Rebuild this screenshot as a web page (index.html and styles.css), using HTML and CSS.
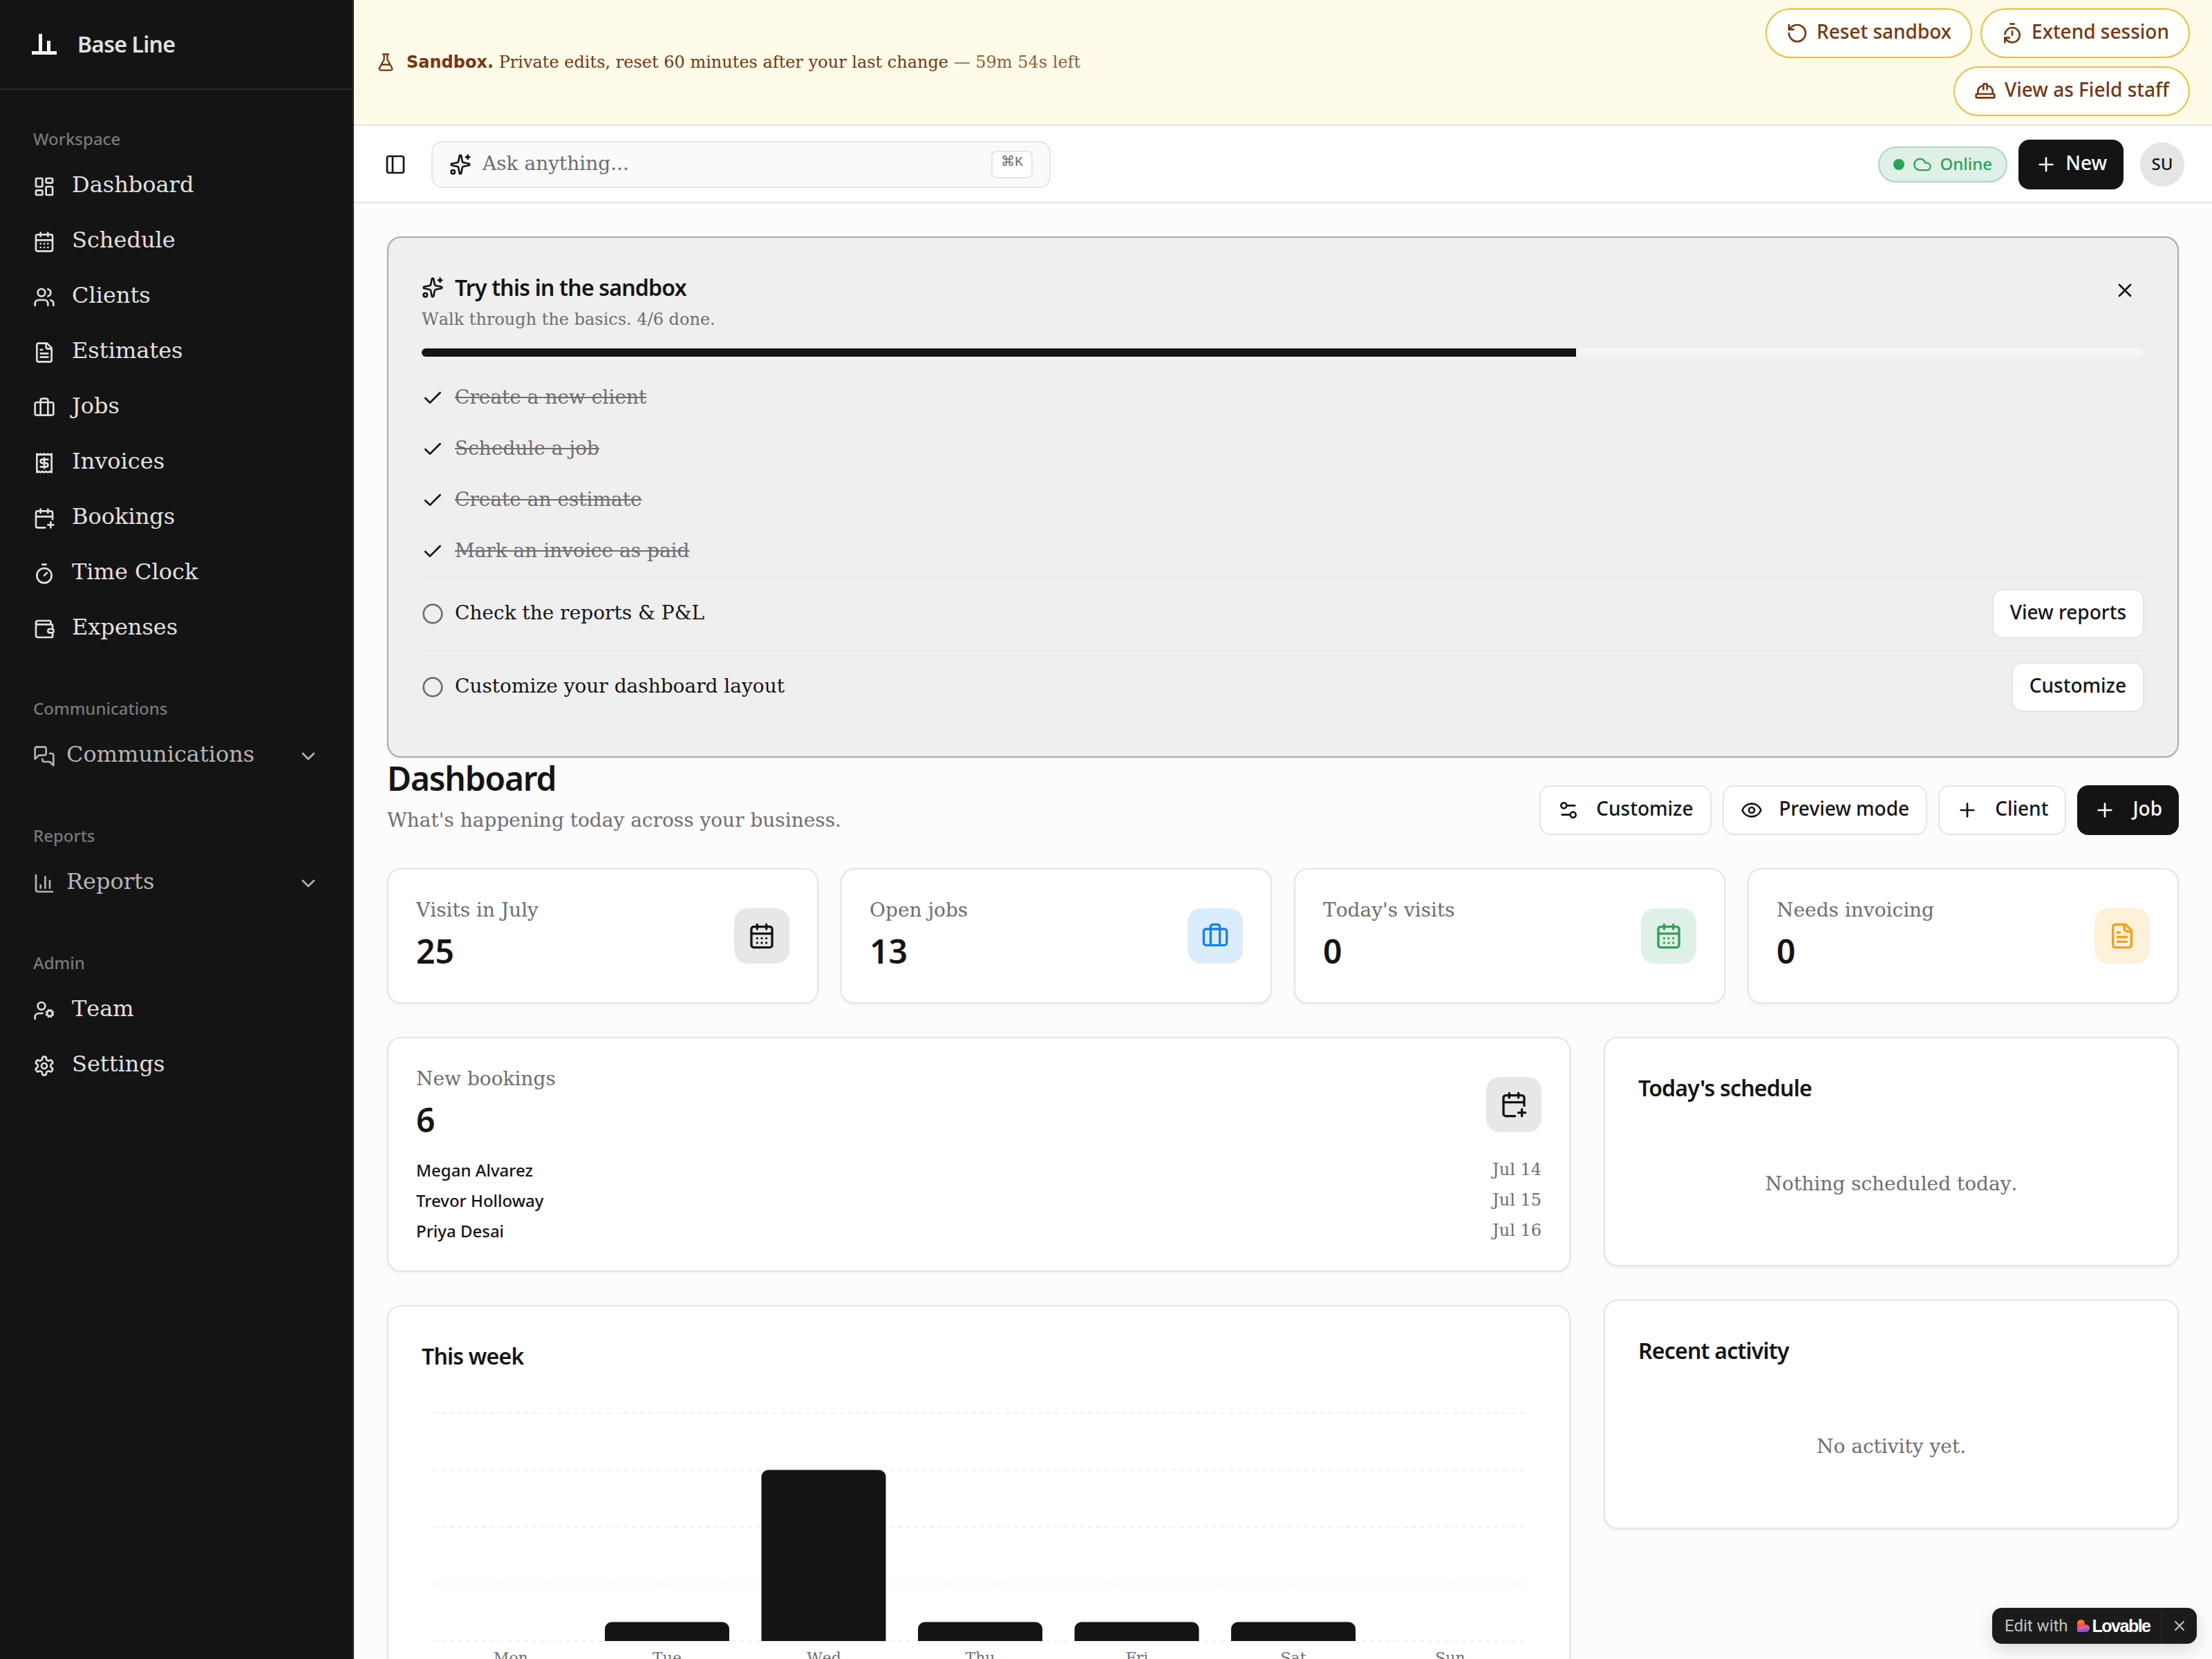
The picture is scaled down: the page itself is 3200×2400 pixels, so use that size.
FILE: index.html
```
<!DOCTYPE html>
<html lang="en">
<head>
    <meta charset="UTF-8">
    <meta name="viewport" content="width=device-width, initial-scale=1.0">
    <title>Base Line - Dashboard</title>

    <link rel="stylesheet" href="styles.css">
</head>
<body>
    <!-- icon set -->
    <svg class="sprite" xmlns="http://www.w3.org/2000/svg">
        <symbol id="grid" viewBox="0 0 24 24"><rect width="7" height="9" x="3" y="3" rx="1"/><rect width="7" height="5" x="14" y="3" rx="1"/><rect width="7" height="9" x="14" y="12" rx="1"/><rect width="7" height="5" x="3" y="16" rx="1"/></symbol>
        <symbol id="calendar" viewBox="0 0 24 24"><path d="M8 2v4M16 2v4"/><rect width="18" height="18" x="3" y="4" rx="2"/><path d="M3 10h18M8 14h.01M12 14h.01M16 14h.01M8 18h.01M12 18h.01M16 18h.01"/></symbol>
        <symbol id="users" viewBox="0 0 24 24"><path d="M16 21v-2a4 4 0 0 0-4-4H6a4 4 0 0 0-4 4v2"/><circle cx="9" cy="7" r="4"/><path d="M22 21v-2a4 4 0 0 0-3-3.87M16 3.13a4 4 0 0 1 0 7.75"/></symbol>
        <symbol id="file" viewBox="0 0 24 24"><path d="M15 2H6a2 2 0 0 0-2 2v16a2 2 0 0 0 2 2h12a2 2 0 0 0 2-2V7Z"/><path d="M14 2v4a2 2 0 0 0 2 2h4M10 9H8M16 13H8M16 17H8"/></symbol>
        <symbol id="case" viewBox="0 0 24 24"><path d="M16 20V4a2 2 0 0 0-2-2h-4a2 2 0 0 0-2 2v16"/><rect width="20" height="14" x="2" y="6" rx="2"/></symbol>
        <symbol id="receipt" viewBox="0 0 24 24"><path d="M4 2v20l2-1 2 1 2-1 2 1 2-1 2 1 2-1 2 1V2l-2 1-2-1-2 1-2-1-2 1-2-1-2 1Z"/><path d="M16 8h-6a2 2 0 1 0 0 4h4a2 2 0 1 1 0 4H8M12 17.5v-11"/></symbol>
        <symbol id="calendar-plus" viewBox="0 0 24 24"><path d="M8 2v4M16 2v4M21 13V6a2 2 0 0 0-2-2H5a2 2 0 0 0-2 2v14a2 2 0 0 0 2 2h8M3 10h18M16 19h6M19 16v6"/></symbol>
        <symbol id="timer" viewBox="0 0 24 24"><path d="M10 2h4M12 14l3-3"/><circle cx="12" cy="14" r="8"/></symbol>
        <symbol id="wallet" viewBox="0 0 24 24"><path d="M19 7V4a1 1 0 0 0-1-1H5a2 2 0 0 0 0 4h15a1 1 0 0 1 1 1v4h-3a2 2 0 0 0 0 4h3a1 1 0 0 0 1-1v-2a1 1 0 0 0-1-1"/><path d="M3 5v14a2 2 0 0 0 2 2h15a1 1 0 0 0 1-1v-4"/></symbol>
        <symbol id="messages" viewBox="0 0 24 24"><path d="M14 9a2 2 0 0 1-2 2H6l-4 4V4a2 2 0 0 1 2-2h8a2 2 0 0 1 2 2z"/><path d="M18 9h2a2 2 0 0 1 2 2v11l-4-4h-6a2 2 0 0 1-2-2v-1"/></symbol>
        <symbol id="chart" viewBox="0 0 24 24"><path d="M3 3v16a2 2 0 0 0 2 2h16M18 17V9M13 17V5M8 17v-3"/></symbol>
        <symbol id="user-cog" viewBox="0 0 24 24"><path d="M10 15H6a4 4 0 0 0-4 4v2M14.305 16.53l.923-.382M15.228 13.852l-.923-.383M16.852 12.228l-.383-.923M16.852 17.772l-.383.924M19.148 12.228l.383-.923M19.53 18.696l-.382-.924M20.772 13.852l.924-.383M20.772 16.148l.924.383"/><circle cx="18" cy="15" r="3"/><circle cx="9" cy="7" r="4"/></symbol>
        <symbol id="gear" viewBox="0 0 24 24"><path d="M12.22 2h-.44a2 2 0 0 0-2 2v.18a2 2 0 0 1-1 1.73l-.43.25a2 2 0 0 1-2 0l-.15-.08a2 2 0 0 0-2.73.73l-.22.38a2 2 0 0 0 .73 2.73l.15.1a2 2 0 0 1 1 1.72v.51a2 2 0 0 1-1 1.74l-.15.09a2 2 0 0 0-.73 2.73l.22.38a2 2 0 0 0 2.73.73l.15-.08a2 2 0 0 1 2 0l.43.25a2 2 0 0 1 1 1.73V20a2 2 0 0 0 2 2h.44a2 2 0 0 0 2-2v-.18a2 2 0 0 1 1-1.73l.43-.25a2 2 0 0 1 2 0l.15.08a2 2 0 0 0 2.73-.73l.22-.39a2 2 0 0 0-.73-2.73l-.15-.08a2 2 0 0 1-1-1.74v-.5a2 2 0 0 1 1-1.74l.15-.09a2 2 0 0 0 .73-2.73l-.22-.38a2 2 0 0 0-2.73-.73l-.15.08a2 2 0 0 1-2 0l-.43-.25a2 2 0 0 1-1-1.73V4a2 2 0 0 0-2-2z"/><circle cx="12" cy="12" r="3"/></symbol>
        <symbol id="chevron" viewBox="0 0 24 24"><path d="m6 9 6 6 6-6"/></symbol>
        <symbol id="flask" viewBox="0 0 24 24"><path d="M14 2v6a2 2 0 0 0 .245.96l5.51 10.08A2 2 0 0 1 18 22H6a2 2 0 0 1-1.755-2.96l5.51-10.08A2 2 0 0 0 10 8V2M6.453 15h11.094M8.5 2h7"/></symbol>
        <symbol id="reset" viewBox="0 0 24 24"><path d="M3 12a9 9 0 1 0 9-9 9.75 9.75 0 0 0-6.74 2.74L3 8"/><path d="M3 3v5h5"/></symbol>
        <symbol id="timer-reset" viewBox="0 0 24 24"><path d="M10 2h4M12 14v-4M4 13a8 8 0 0 1 8-7 8 8 0 1 1-5.3 14L4 17.6"/><path d="M9 17H4v5"/></symbol>
        <symbol id="hat" viewBox="0 0 24 24"><path d="M10 10V5a1 1 0 0 1 1-1h2a1 1 0 0 1 1 1v5M14 6a6 6 0 0 1 6 6v3M4 15v-3a6 6 0 0 1 6-6"/><rect x="2" y="15" width="20" height="4" rx="1"/></symbol>
        <symbol id="panel" viewBox="0 0 24 24"><rect width="18" height="18" x="3" y="3" rx="2"/><path d="M9 3v18"/></symbol>
        <symbol id="sparkles" viewBox="0 0 24 24"><path d="M11.017 2.814a1 1 0 0 1 1.966 0l1.051 5.558a2 2 0 0 0 1.594 1.594l5.558 1.051a1 1 0 0 1 0 1.966l-5.558 1.051a2 2 0 0 0-1.594 1.594l-1.051 5.558a1 1 0 0 1-1.966 0l-1.051-5.558a2 2 0 0 0-1.594-1.594l-5.558-1.051a1 1 0 0 1 0-1.966l5.558-1.051a2 2 0 0 0 1.594-1.594zM20 2v4M22 4h-4"/><circle cx="4" cy="20" r="2"/></symbol>
        <symbol id="cloud" viewBox="0 0 24 24"><path d="M17.5 19H9a7 7 0 1 1 6.71-9h1.79a4.5 4.5 0 1 1 0 9Z"/></symbol>
        <symbol id="plus" viewBox="0 0 24 24"><path d="M5 12h14M12 5v14"/></symbol>
        <symbol id="close" viewBox="0 0 24 24"><path d="M18 6 6 18M6 6l12 12"/></symbol>
        <symbol id="check" viewBox="0 0 24 24"><path d="M20 6 9 17l-5-5"/></symbol>
        <symbol id="circle" viewBox="0 0 24 24"><circle cx="12" cy="12" r="10"/></symbol>
        <symbol id="sliders" viewBox="0 0 24 24"><path d="M14 17H5M19 7h-9"/><circle cx="17" cy="17" r="3"/><circle cx="7" cy="7" r="3"/></symbol>
        <symbol id="eye" viewBox="0 0 24 24"><path d="M2.062 12.348a1 1 0 0 1 0-.696 10.75 10.75 0 0 1 19.876 0 1 1 0 0 1 0 .696 10.75 10.75 0 0 1-19.876 0"/><circle cx="12" cy="12" r="3"/></symbol>
    </svg>

    <aside class="sidebar">
        <div class="brand">
            <svg class="logo" viewBox="0 0 36 30"><path d="M0 25h36v5H0zM10 0h5v26h-5zM22 10h5v16h-5z"/></svg>
            <span>Base Line</span>
        </div>
        <nav class="nav">
            <h4>Workspace</h4>
            <a><svg class="icon"><use href="#grid"/></svg><span>Dashboard</span></a>
            <a><svg class="icon"><use href="#calendar"/></svg><span>Schedule</span></a>
            <a><svg class="icon"><use href="#users"/></svg><span>Clients</span></a>
            <a><svg class="icon"><use href="#file"/></svg><span>Estimates</span></a>
            <a><svg class="icon"><use href="#case"/></svg><span>Jobs</span></a>
            <a><svg class="icon"><use href="#receipt"/></svg><span>Invoices</span></a>
            <a><svg class="icon"><use href="#calendar-plus"/></svg><span>Bookings</span></a>
            <a><svg class="icon"><use href="#timer"/></svg><span>Time Clock</span></a>
            <a><svg class="icon"><use href="#wallet"/></svg><span>Expenses</span></a>
            <h4>Communications</h4>
            <a class="fold"><svg class="icon"><use href="#messages"/></svg><span>Communications</span><svg class="icon arrow"><use href="#chevron"/></svg></a>
            <h4>Reports</h4>
            <a class="fold"><svg class="icon"><use href="#chart"/></svg><span>Reports</span><svg class="icon arrow"><use href="#chevron"/></svg></a>
            <h4>Admin</h4>
            <a><svg class="icon"><use href="#user-cog"/></svg><span>Team</span></a>
            <a><svg class="icon"><use href="#gear"/></svg><span>Settings</span></a>
        </nav>
    </aside>

    <div class="page">
        <div class="banner">
            <svg class="icon small"><use href="#flask"/></svg>
            <p><strong>Sandbox.</strong> Private edits, reset 60 minutes after your last change <span class="left">— 59m 54s left</span></p>
            <div class="banner-actions">
                <button class="btn pill"><svg class="icon"><use href="#reset"/></svg><span>Reset sandbox</span></button>
                <button class="btn pill"><svg class="icon"><use href="#timer-reset"/></svg><span>Extend session</span></button>
                <button class="btn pill"><svg class="icon"><use href="#hat"/></svg><span>View as Field staff</span></button>
            </div>
        </div>

        <header class="topbar">
            <svg class="icon toggle"><use href="#panel"/></svg>
            <div class="search">
                <svg class="icon"><use href="#sparkles"/></svg>
                <span>Ask anything...</span>
                <kbd>⌘K</kbd>
            </div>
            <div class="online"><i class="dot"></i><svg class="icon small"><use href="#cloud"/></svg><span>Online</span></div>
            <button class="btn dark new"><svg class="icon"><use href="#plus"/></svg><span>New</span></button>
            <div class="avatar">SU</div>
        </header>

        <main class="content">
            <section class="card guide">
                <div class="guide-head">
                    <div>
                        <h3><svg class="icon"><use href="#sparkles"/></svg><span>Try this in the sandbox</span></h3>
                        <p>Walk through the basics. 4/6 done.</p>
                    </div>
                    <div class="close"><svg class="icon"><use href="#close"/></svg></div>
                </div>
                <div class="progress"><div class="progress-bar" style="width: 67%"></div></div>
                <ul class="steps">
                    <li class="done"><svg class="icon"><use href="#check"/></svg><span>Create a new client</span></li>
                    <li class="done"><svg class="icon"><use href="#check"/></svg><span>Schedule a job</span></li>
                    <li class="done"><svg class="icon"><use href="#check"/></svg><span>Create an estimate</span></li>
                    <li class="done"><svg class="icon"><use href="#check"/></svg><span>Mark an invoice as paid</span></li>
                    <li><svg class="icon"><use href="#circle"/></svg><span>Check the reports &amp; P&amp;L</span><button class="btn"><span>View reports</span></button></li>
                    <li><svg class="icon"><use href="#circle"/></svg><span>Customize your dashboard layout</span><button class="btn"><span>Customize</span></button></li>
                </ul>
            </section>

            <div class="title-row">
                <div>
                    <h1>Dashboard</h1>
                    <p>What's happening today across your business.</p>
                </div>
                <div class="actions">
                    <button class="btn wide"><svg class="icon"><use href="#sliders"/></svg><span>Customize</span></button>
                    <button class="btn wide"><svg class="icon"><use href="#eye"/></svg><span>Preview mode</span></button>
                    <button class="btn wide"><svg class="icon"><use href="#plus"/></svg><span>Client</span></button>
                    <button class="btn wide dark"><svg class="icon"><use href="#plus"/></svg><span>Job</span></button>
                </div>
            </div>

            <div class="stats">
                <div class="card stat">
                    <div><p>Visits in July</p><b>25</b></div>
                    <div class="tile"><svg class="icon"><use href="#calendar"/></svg></div>
                </div>
                <div class="card stat">
                    <div><p>Open jobs</p><b>13</b></div>
                    <div class="tile blue"><svg class="icon"><use href="#case"/></svg></div>
                </div>
                <div class="card stat">
                    <div><p>Today's visits</p><b>0</b></div>
                    <div class="tile green"><svg class="icon"><use href="#calendar"/></svg></div>
                </div>
                <div class="card stat">
                    <div><p>Needs invoicing</p><b>0</b></div>
                    <div class="tile amber"><svg class="icon"><use href="#file"/></svg></div>
                </div>
            </div>

            <div class="columns">
                <div class="col">
                    <section class="card bookings">
                        <div class="stat">
                            <div><p>New bookings</p><b>6</b></div>
                            <div class="tile"><svg class="icon"><use href="#calendar-plus"/></svg></div>
                        </div>
                        <ul>
                            <li><span>Megan Alvarez</span><time>Jul 14</time></li>
                            <li><span>Trevor Holloway</span><time>Jul 15</time></li>
                            <li><span>Priya Desai</span><time>Jul 16</time></li>
                        </ul>
                    </section>
                    <section class="card week">
                        <h3>This week</h3>
                        <svg class="chart" viewBox="0 0 1612 440">
                            <path class="lines" d="M16 46H1594M16 128.5H1594M16 211H1594M16 293.5H1594M16 376H1594"/>
                            <path class="bars" d="M265 376v-17.5a10 10 0 0 1 10-10h160a10 10 0 0 1 10 10V376z"/>
                            <path class="bars" d="M491.500 376V138.500a10 10 0 0 1 10-10h160a10 10 0 0 1 10 10V376z"/>
                            <path class="bars" d="M718 376v-17.5a10 10 0 0 1 10-10h160a10 10 0 0 1 10 10V376z"/>
                            <path class="bars" d="M944.500 376v-17.5a10 10 0 0 1 10-10h160a10 10 0 0 1 10 10V376z"/>
                            <path class="bars" d="M1171 376v-17.5a10 10 0 0 1 10-10h160a10 10 0 0 1 10 10V376z"/>
                            <text x="129" y="408">Mon</text>
                            <text x="355" y="408">Tue</text>
                            <text x="582" y="408">Wed</text>
                            <text x="808" y="408">Thu</text>
                            <text x="1035" y="408">Fri</text>
                            <text x="1261" y="408">Sat</text>
                            <text x="1488" y="408">Sun</text>
                        </svg>
                    </section>
                </div>
                <div class="col">
                    <section class="card side">
                        <h3>Today's schedule</h3>
                        <p>Nothing scheduled today.</p>
                    </section>
                    <section class="card side">
                        <h3>Recent activity</h3>
                        <p>No activity yet.</p>
                    </section>
                </div>
            </div>
        </main>
    </div>

    <div class="badge">
        <span class="edit">Edit with</span>
        <svg class="heart" viewBox="0 0 18 18">
            <defs>
                <linearGradient id="flame" x1="0.35" y1="0" x2="0.5" y2="1">
                    <stop offset="0.2" stop-color="#ff7a14"/>
                    <stop offset="0.45" stop-color="#fb4a3c"/>
                    <stop offset="0.65" stop-color="#f257b0"/>
                    <stop offset="0.95" stop-color="#5a62d6"/>
                </linearGradient>
            </defs>
            <path fill="url(#flame)" d="M0 5.500a5.500 5.500 0 0 1 11 0v1.500h1.500a5.500 5.500 0 0 1 0 11H0z"/>
        </svg>
        <span class="name">Lovable</span>
        <svg class="icon badge-close"><use href="#close"/></svg>
    </div>
</body>
</html>
```

FILE: styles.css
```
*{
    box-sizing: border-box;
    margin: 0;
    padding: 0;
}

body{
    display: flex;
    width: 3200px;
    height: 2400px;
    overflow: hidden;
    background-color: #fcfcfc;
    color: #141414;
    font-family: "DejaVu Serif", serif;
    font-size: 28px;
    line-height: 40px;
    font-kerning: none;
}

ul{
    list-style: none;
}

.sprite{
    position: absolute;
    width: 0;
    height: 0;
}

.icon{
    flex: none;
    width: 32px;
    height: 32px;
    fill: none;
    stroke: currentColor;
    stroke-width: 2;
    stroke-linecap: round;
    stroke-linejoin: round;
}

.icon.small{
    width: 28px;
    height: 28px;
}

/* sidebar */
.sidebar{
    flex: none;
    width: 512px;
    height: 2400px;
    background-color: #141414;
    border-right: 2px solid #2b2b2b;
    color: #e0e0e0;
}

.brand{
    display: flex;
    align-items: center;
    gap: 30px;
    height: 130px;
    padding-left: 46px;
    border-bottom: 2px solid #2b2b2b;
    font: 600 32px/44px "Noto Sans", sans-serif;
    letter-spacing: -0.8px;
}

.brand span{
    padding-bottom: 1px;
}

.logo{
    width: 36px;
    height: 30px;
    fill: #fff;
}

.nav{
    padding: 47px 48px 0;
}

.nav h4{
    height: 48px;
    margin-bottom: 5px;
    font: 500 24px/48px "Noto Sans", sans-serif;
    color: #787878;
}

.nav a + h4{
    margin-top: 51px;
}

.nav a{
    display: flex;
    align-items: center;
    gap: 24px;
    height: 80px;
    font-size: 32px;
}

.nav a span{
    padding-bottom: 6px;
}

.nav .fold{
    gap: 16px;
    color: #b4b4b4;
}

.nav .arrow{
    margin-left: auto;
}

/* right part */
.page{
    flex: 1;
    min-width: 0;
}

.banner{
    display: flex;
    align-items: center;
    gap: 16px;
    height: 182px;
    padding: 0 32px;
    background-color: #fffbe9;
    border-bottom: 2px solid #e5e5e5;
    color: #78350f;
    font-size: 24px;
}

.banner strong{
    font-family: "DejaVu Sans", sans-serif;
    font-weight: 700;
}

.left{
    opacity: .8;
}

.banner-actions{
    display: flex;
    flex-wrap: wrap;
    justify-content: flex-end;
    gap: 12px;
    width: 700px;
    margin-left: auto;
}

.btn{
    display: flex;
    flex: none;
    align-items: center;
    gap: 12px;
    height: 72px;
    padding: 0 24px;
    background-color: #fff;
    border: 2px solid #e5e5e5;
    border-radius: 16px;
    color: #141414;
    font: 500 28px/40px "Noto Sans", sans-serif;
}

.btn span{
    padding-bottom: 6px;
}

.btn.pill{
    padding: 0 28px;
    background-color: #fffffb;
    border-color: #f0bc3c;
    border-radius: 36px;
    color: #78350f;
}

.btn.dark{
    background-color: #141414;
    border: 0;
    color: #fff;
}

.btn.wide{
    gap: 24px;
}

.topbar{
    display: flex;
    align-items: center;
    height: 112px;
    padding: 2px 40px 0 44px;
    background-color: #fff;
    border-bottom: 2px solid #e5e5e5;
}

.search{
    display: flex;
    align-items: center;
    gap: 16px;
    width: 896px;
    height: 68px;
    margin-left: 36px;
    padding: 0 24px;
    background-color: #fafafa;
    border: 2px solid #e5e5e5;
    border-radius: 16px;
}

.search span{
    padding-bottom: 2px;
    color: #6e6e6e;
}

kbd{
    height: 40px;
    min-width: 60px;
    margin-left: auto;
    padding: 0 12px;
    background-color: #fff;
    border: 2px solid #e5e5e5;
    border-radius: 8px;
    color: #6e6e6e;
    font: 20px/30px "Liberation Mono", "DejaVu Sans", monospace;
    text-align: center;
}

.online{
    display: flex;
    align-items: center;
    gap: 12px;
    height: 52px;
    margin-left: auto;
    padding: 0 20px;
    background-color: #dff1e6;
    border: 2px solid #a9d9bd;
    border-radius: 26px;
    color: #2ba359;
    font: 500 24px/32px "Noto Sans", sans-serif;
}

.online span{
    padding-bottom: 2px;
}

.dot{
    width: 16px;
    height: 16px;
    background-color: #2ba359;
    border-radius: 50%;
}

.new{
    margin-left: 16px;
}

.avatar{
    width: 64px;
    height: 64px;
    margin-left: 24px;
    background-color: #e5e5e5;
    border-radius: 50%;
    font: 500 24px/62px "Noto Sans", sans-serif;
    text-align: center;
}

.content{
    padding: 48px;
}

.card{
    background-color: #fff;
    border: 2px solid #e5e5e5;
    border-radius: 20px;
    box-shadow: 0 2px 4px rgba(0, 0, 0, .05);
}

h3{
    font: 600 32px/48px "Noto Sans", sans-serif;
    letter-spacing: -0.8px;
}

/* onboarding */
.guide{
    height: 754px;
    padding: 48px;
    background-color: #efefef;
    border-color: #a9a9a9;
}

.guide-head{
    display: flex;
    justify-content: space-between;
    height: 112px;
}

.guide-head h3{
    display: flex;
    align-items: center;
    gap: 16px;
    height: 48px;
}

.guide-head p{
    margin-top: 2px;
    color: #6e6e6e;
    font-size: 24px;
}

.close{
    padding: 12px;
}

.progress{
    height: 12px;
    overflow: hidden;
    background-color: #f5f5f5;
    border-radius: 6px;
}

.progress-bar{
    height: 12px;
    background-color: #141414;
}

.steps{
    margin-top: 24px;
}

.steps li{
    display: flex;
    align-items: center;
    gap: 16px;
    height: 74px;
    padding: 16px 0;
    border-bottom: 2px solid #eaeaea;
}

.steps li:not(.done){
    height: 106px;
}

.steps li:last-child{
    height: 104px;
    border-bottom: 0;
}

.steps li > span{
    padding-bottom: 2px;
}

.steps li > .icon{
    color: #6e6e6e;
}

.steps .done > .icon{
    color: #141414;
}

.steps .done span{
    color: #6e6e6e;
    text-decoration: line-through;
}

.steps .btn{
    margin-left: auto;
}

/* title */
.title-row{
    display: flex;
    justify-content: space-between;
    height: 112px;
}

h1{
    font: 600 48px/60px "Noto Sans", sans-serif;
    letter-spacing: -1.2px;
}

.title-row p{
    margin-top: 11px;
    color: #6e6e6e;
}

.actions{
    display: flex;
    gap: 16px;
    padding-top: 40px;
}

/* numbers */
.stats{
    display: grid;
    grid-template-columns: repeat(4, 1fr);
    gap: 32px;
    margin-top: 48px;
}

.stat{
    display: flex;
    align-items: center;
    justify-content: space-between;
}

.card.stat{
    padding: 40px;
}

.stat p{
    height: 40px;
    line-height: 38px;
    color: #6e6e6e;
}

.stat b{
    display: block;
    height: 72px;
    font: 600 48px/76px "Noto Sans", sans-serif;
}

.tile{
    padding: 20px;
    width: 80px;
    height: 80px;
    background-color: #e7e7e7;
    border-radius: 20px;
}

.tile .icon{
    display: block;
    width: 40px;
    height: 40px;
}

.tile.blue{
    background-color: #dbecfd;
    color: #1a80e6;
}

.tile.green{
    background-color: #dff1e6;
    color: #2ba359;
}

.tile.amber{
    background-color: #fdf1da;
    color: #f0a01c;
}

.columns{
    display: grid;
    grid-template-columns: 1712px 832px;
    gap: 48px;
    margin-top: 48px;
}

.col{
    display: flex;
    flex-direction: column;
    gap: 48px;
}

.bookings{
    height: 340px;
    padding: 40px;
}

.bookings ul{
    display: grid;
    gap: 8px;
    margin-top: 21px;
}

.bookings li{
    display: flex;
    justify-content: space-between;
    font: 500 24px/36px "Noto Sans", sans-serif;
}

.bookings time{
    color: #6e6e6e;
    font: 24px/34px "DejaVu Serif", serif;
}

.week{
    height: 600px;
    padding: 48px;
}

.chart{
    display: block;
    width: 1612px;
    height: 440px;
    margin-top: 12px;
}

.lines{
    fill: none;
    stroke: #f0f0f0;
    stroke-width: 2;
    stroke-dasharray: 6 6;
}

.bars{
    fill: #141414;
}

.chart text{
    fill: #6e6e6e;
    font-size: 22px;
    text-anchor: middle;
}

.side{
    height: 332px;
    padding: 48px;
}

.side p{
    margin-top: 95px;
    color: #6e6e6e;
    text-align: center;
}

/* lies over the page, bottom right */
.badge{
    position: absolute;
    top: 2326px;
    left: 2882px;
    display: flex;
    align-items: center;
    width: 296px;
    height: 52px;
    padding-left: 18px;
    background-color: #1b1b1b;
    border-radius: 14px;
    box-shadow: 0 8px 24px rgba(0, 0, 0, .14);
    color: #c4c4c0;
    font: 24px/48px Roboto, sans-serif;
}

.heart{
    width: 18px;
    height: 18px;
    margin: 0 4px 0 13px;
}

.name{
    color: #fff;
    font: 700 25px/48px "Liberation Sans", sans-serif;
    letter-spacing: -1.5px;
}

.badge-close{
    width: 52px;
    height: 48px;
    margin-left: auto;
    padding: 12px 13px;
    border-left: 2px solid #262626;
}
```
